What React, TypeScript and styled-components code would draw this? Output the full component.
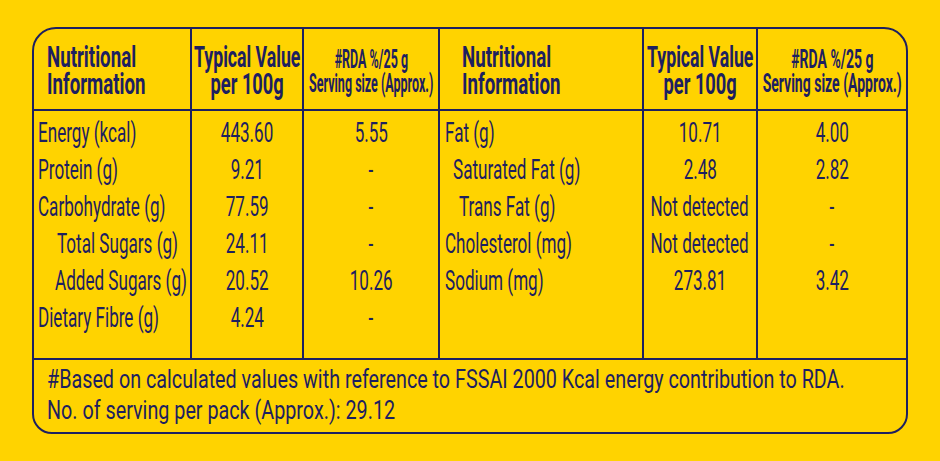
import React from "react";
import styled, { createGlobalStyle } from "styled-components";

const NAVY = "#1d2060";
const YELLOW = "#ffd300";

const Global = createGlobalStyle`
  html, body { margin: 0; padding: 0; background: ${YELLOW}; }
  body { font-family: Roboto, "Liberation Sans", sans-serif; color: ${NAVY}; }
`;

const Page = styled.div`
  width: 940px;
  height: 461px;
  box-sizing: border-box;
  padding: 27px 0 0 32px;
  background: ${YELLOW};
`;

const Card = styled.div`
  width: 876px;
  height: 407px;
  box-sizing: border-box;
  border: 2px solid ${NAVY};
  border-radius: 24px 24px 20px 20px;
  display: grid;
  grid-template-rows: 82px 249px 1fr;
  grid-template-columns: 872px;
  overflow: hidden;
`;

const Cols = styled.div`
  display: grid;
  grid-template-columns: 158px 112px 136px 204px 114px 148px;
  border-bottom: 2px solid ${NAVY};
  min-width: 0;
`;

const HeadCell = styled.div<{ $align: "left" | "center"; $pad?: number; $top?: number }>`
  min-width: 0;
  border-right: 2px solid ${NAVY};
  &:last-child { border-right: none; }
  display: flex;
  flex-direction: column;
  align-items: ${(p) => (p.$align === "left" ? "flex-start" : "center")};
  padding: ${(p) => p.$top ?? 15}px 0 0 ${(p) => p.$pad ?? 0}px;
  font-weight: 700;
`;

const HeadLine = styled.div<{ $small?: boolean }>`
  font-size: ${(p) => (p.$small ? 25 : 29)}px;
  line-height: ${(p) => (p.$small ? 24 : 27)}px;
  height: ${(p) => (p.$small ? 24 : 27)}px;
  white-space: nowrap;
`;

const BodyCell = styled.div<{ $align: "left" | "center"; $pad?: number }>`
  min-width: 0;
  border-right: 2px solid ${NAVY};
  &:last-child { border-right: none; }
  display: flex;
  flex-direction: column;
  align-items: ${(p) => (p.$align === "left" ? "flex-start" : "center")};
  padding: 3px 0 0 ${(p) => p.$pad ?? 0}px;
`;

const Line = styled.div<{ $indent?: number }>`
  font-size: 28px;
  line-height: 37px;
  height: 37px;
  white-space: nowrap;
  padding-left: ${(p) => p.$indent ?? 0}px;
`;

const Squeeze = styled.span<{ $s: number; $o?: "left" | "center" }>`
  display: inline-block;
  white-space: nowrap;
  transform: scaleX(${(p) => p.$s});
  transform-origin: ${(p) => p.$o ?? "left"} center;
`;

const Footer = styled.div`
  padding: 4px 0 0 13px;
  display: flex;
  flex-direction: column;
  align-items: flex-start;
  min-width: 0;
`;

const FootLine = styled.div`
  font-size: 25px;
  line-height: 31px;
  height: 31px;
  white-space: nowrap;
`;

type Row = [string, number, string, string];

const left: Row[] = [
  ["Energy (kcal)", 0, "443.60", "5.55"],
  ["Protein (g)", 0, "9.21", "-"],
  ["Carbohydrate (g)", 0, "77.59", "-"],
  ["Total Sugars (g)", 19, "24.11", "-"],
  ["Added Sugars (g)", 17, "20.52", "10.26"],
  ["Dietary Fibre (g)", 0, "4.24", "-"],
];

const right: Row[] = [
  ["Fat (g)", 0, "10.71", "4.00"],
  ["Saturated Fat (g)", 8, "2.48", "2.82"],
  ["Trans Fat (g)", 14, "Not detected", "-"],
  ["Cholesterol (mg)", 0, "Not detected", "-"],
  ["Sodium (mg)", 0, "273.81", "3.42"],
];

const BS = 0.61;
const HS = 0.63;
const FS = 0.79;

const Header: React.FC<{ pad: number; rda: number }> = ({ pad, rda }) => (
  <>
    <HeadCell $align="left" $pad={pad}>
      <HeadLine><Squeeze $s={0.645}>Nutritional</Squeeze></HeadLine>
      <HeadLine><Squeeze $s={0.645}>Information</Squeeze></HeadLine>
    </HeadCell>
    <HeadCell $align="center">
      <HeadLine><Squeeze $s={HS - 0.02} $o="center">Typical Value</Squeeze></HeadLine>
      <HeadLine><Squeeze $s={HS} $o="center">per 100g</Squeeze></HeadLine>
    </HeadCell>
    <HeadCell $align="center" $top={19}>
      <HeadLine $small><Squeeze $s={rda} $o="center">#RDA %/25 g</Squeeze></HeadLine>
      <HeadLine $small><Squeeze $s={rda} $o="center">Serving size (Approx.)</Squeeze></HeadLine>
    </HeadCell>
  </>
);

const Body: React.FC<{ rows: Row[]; pad: number }> = ({ rows, pad }) => (
  <>
    <BodyCell $align="left" $pad={pad}>
      {rows.map((r) => (
        <Line key={r[0]} $indent={r[1]}><Squeeze $s={BS}>{r[0]}</Squeeze></Line>
      ))}
    </BodyCell>
    <BodyCell $align="center">
      {rows.map((r) => (
        <Line key={r[0]}><Squeeze $s={BS} $o="center">{r[2]}</Squeeze></Line>
      ))}
    </BodyCell>
    <BodyCell $align="center">
      {rows.map((r) => (
        <Line key={r[0]}><Squeeze $s={BS} $o="center">{r[3]}</Squeeze></Line>
      ))}
    </BodyCell>
  </>
);

export default function App() {
  return (
    <Page>
      <Global />
      <Card>
        <Cols>
          <Header pad={13} rda={0.5} />
          <Header pad={22} rda={0.56} />
        </Cols>
        <Cols>
          <Body rows={left} pad={4} />
          <Body rows={right} pad={5} />
        </Cols>
        <Footer>
          <FootLine>
            <Squeeze $s={FS}>
              #Based on calculated values with reference to FSSAI 2000 Kcal energy contribution to RDA.
            </Squeeze>
          </FootLine>
          <FootLine>
            <Squeeze $s={FS}>No. of serving per pack (Approx.): 29.12</Squeeze>
          </FootLine>
        </Footer>
      </Card>
    </Page>
  );
}
